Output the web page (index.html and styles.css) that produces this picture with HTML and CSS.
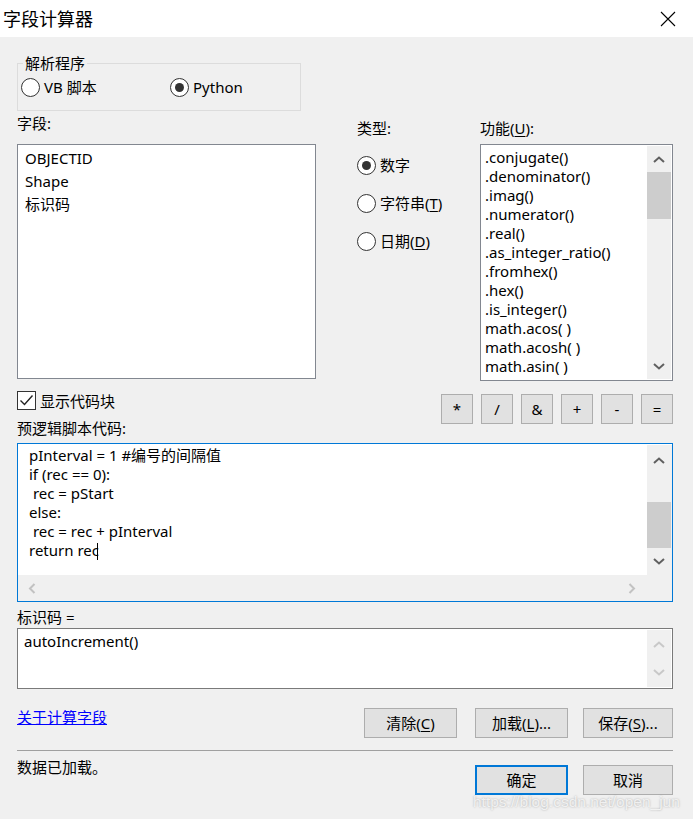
FILE: index.html
```html
<!DOCTYPE html>
<html lang="zh-CN">
<head>
    <meta charset="UTF-8">
    <title>字段计算器</title>
    <link rel="stylesheet" href="styles.css">
</head>
<body>
    <div class="titlebar">
        <span class="title">字段计算器</span>
        <svg class="close" width="16" height="16" viewBox="0 0 16 16"><path d="M1 1L15 15M15 1L1 15" stroke="#000" stroke-width="1.1" fill="none"/></svg>
    </div>

    <div class="dialog">
        <fieldset class="group">
            <legend>解析程序</legend>
            <div class="parser-row">
                <label class="radio parser-vb"><span class="circle"></span><span>VB 脚本</span></label>
                <label class="radio"><span class="circle checked"></span><span>Python</span></label>
            </div>
        </fieldset>

        <div class="main">
            <div class="col-fields">
                <div class="head">字段:</div>
                <div class="list fields-list">
                    <div class="field-item">OBJECTID</div>
                    <div class="field-item">Shape</div>
                    <div class="field-item">标识码</div>
                </div>
            </div>
            <div class="col-types">
                <div class="head">类型:</div>
                <div class="types">
                    <label class="radio"><span class="circle checked"></span><span>数字</span></label>
                    <label class="radio"><span class="circle"></span><span>字符串(<u>T</u>)</span></label>
                    <label class="radio"><span class="circle"></span><span>日期(<u>D</u>)</span></label>
                </div>
            </div>
            <div class="col-funcs">
                <div class="head">功能(<u>U</u>):</div>
                <div class="list funcs-list">
                    <div class="funcs">
                        <div>.conjugate()</div>
                        <div>.denominator()</div>
                        <div>.imag()</div>
                        <div>.numerator()</div>
                        <div>.real()</div>
                        <div>.as_integer_ratio()</div>
                        <div>.fromhex()</div>
                        <div>.hex()</div>
                        <div>.is_integer()</div>
                        <div>math.acos( )</div>
                        <div>math.acosh( )</div>
                        <div>math.asin( )</div>
                        <div>math.asinh( )</div>
                    </div>
                    <div class="vscroll">
                        <div class="sb-btn sb-up"><svg width="12" height="7" viewBox="0 0 12 7"><path d="M1 6L6 1.5L11 6" stroke="#606060" stroke-width="2" fill="none"/></svg></div>
                        <div class="thumb funcs-thumb"></div>
                        <div class="sb-fill"></div>
                        <div class="sb-btn sb-down"><svg width="12" height="7" viewBox="0 0 12 7"><path d="M1 1L6 5.5L11 1" stroke="#606060" stroke-width="2" fill="none"/></svg></div>
                    </div>
                </div>
            </div>
        </div>

        <div class="tools">
            <div class="tools-left">
                <label class="check-row"><span class="checkbox"><svg width="15" height="13" viewBox="0 0 15 13"><path d="M1.5 6.5L5.5 10.5L13.5 1.5" stroke="#222" stroke-width="1.4" fill="none"/></svg></span><span>显示代码块</span></label>
                <div class="code-label">预逻辑脚本代码:</div>
            </div>
            <div class="ops">
                <button class="btn op">*</button>
                <button class="btn op">/</button>
                <button class="btn op">&amp;</button>
                <button class="btn op">+</button>
                <button class="btn op">-</button>
                <button class="btn op">=</button>
            </div>
        </div>

        <div class="code-box">
            <div class="code-main">
                <pre class="code">pInterval = 1 #编号的间隔值
if (rec == 0):
 rec = pStart
else:
 rec = rec + pInterval
return rec<span class="caret"></span></pre>
                <div class="vscroll code-scroll">
                    <div class="sb-btn code-up"><svg width="12" height="7" viewBox="0 0 12 7"><path d="M1 6L6 1.5L11 6" stroke="#606060" stroke-width="2" fill="none"/></svg></div>
                    <div class="sb-gap"></div>
                    <div class="thumb code-thumb"></div>
                    <div class="sb-btn sb-fill"><svg width="12" height="7" viewBox="0 0 12 7"><path d="M1 1L6 5.5L11 1" stroke="#606060" stroke-width="2" fill="none"/></svg></div>
                </div>
            </div>
            <div class="hscroll">
                <svg width="8" height="11" viewBox="0 0 8 11"><path d="M6.5 1L2 5.5L6.5 10" stroke="#c2c2c2" stroke-width="2" fill="none"/></svg>
                <svg width="8" height="11" viewBox="0 0 8 11"><path d="M1.5 1L6 5.5L1.5 10" stroke="#c2c2c2" stroke-width="2" fill="none"/></svg>
            </div>
        </div>

        <div class="expr-label">标识码 =</div>
        <div class="expr-box">
            <div class="expr">autoIncrement()</div>
            <div class="vscroll expr-scroll">
                <div class="sb-btn"><svg width="12" height="7" viewBox="0 0 12 7"><path d="M1 6L6 1.5L11 6" stroke="#c8c8c8" stroke-width="2" fill="none"/></svg></div>
                <div class="sb-btn"><svg width="12" height="7" viewBox="0 0 12 7"><path d="M1 1L6 5.5L11 1" stroke="#c8c8c8" stroke-width="2" fill="none"/></svg></div>
            </div>
        </div>

        <div class="actions">
            <a class="help-link" href="#">关于计算字段</a>
            <button class="btn btn-clear">清除(<u>C</u>)</button>
            <button class="btn btn-load">加载(<u>L</u>)...</button>
            <button class="btn btn-save">保存(<u>S</u>)...</button>
        </div>

        <div class="separator"></div>

        <div class="status-row">
            <div class="status">数据已加载。</div>
            <button class="btn btn-ok">确定</button>
            <button class="btn btn-cancel">取消</button>
        </div>
    </div>

    <div class="watermark">https://blog.csdn.net/open_jun</div>
</body>
</html>
```

FILE: styles.css
```css
* {
    box-sizing: border-box;
}
body {
    margin: 0;
    width: 693px;
    height: 819px;
    overflow: hidden;
    position: relative;
    background-color: #f0f0f0;
    font-family: "Noto Sans", "Noto Sans CJK SC", sans-serif;
    font-size: 15px;
    color: #000;
}
.titlebar {
    height: 37px;
    background-color: #fff;
    display: flex;
    align-items: center;
    justify-content: space-between;
    padding: 0 17px 0 3px;
}
.title {
    font-size: 18px;
    line-height: 24px;
}
.close {
    display: block;
}
.dialog {
    padding: 0 20px 0 17px;
}
u {
    text-decoration-thickness: 1px;
    text-underline-offset: 2px;
}

/* radios and checkbox */
.radio {
    display: flex;
    align-items: center;
    gap: 4px;
    height: 20px;
    line-height: 18px;
}
.circle {
    width: 19px;
    height: 19px;
    border: 1px solid #333;
    border-radius: 50%;
    background-color: #fff;
    display: flex;
    align-items: center;
    justify-content: center;
}
.circle.checked::after {
    content: "";
    width: 9px;
    height: 9px;
    border-radius: 50%;
    background-color: #333;
}
.checkbox {
    width: 19px;
    height: 19px;
    border: 1px solid #333;
    background-color: #fff;
    display: flex;
    align-items: center;
    justify-content: center;
}

/* parser group */
.group {
    width: 284px;
    margin: 17px 0 0;
    padding: 5px 3px 13px;
    border: 1px solid #dcdcdc;
}
.group legend {
    margin-left: 2px;
    padding: 0 2px;
    line-height: 18px;
}
.parser-row {
    display: flex;
}
.parser-vb {
    width: 149px;
}

/* fields / types / functions */
.main {
    display: flex;
}
.head {
    line-height: 18px;
}
.col-fields {
    width: 299px;
}
.col-fields .head {
    margin-top: 3px;
}
.col-types {
    width: 123px;
    margin-left: 41px;
}
.col-types .head,
.col-funcs .head {
    margin-top: 8px;
}
.col-funcs {
    width: 193px;
}
.list {
    background-color: #fff;
    border: 1px solid #828790;
}
.fields-list {
    margin-top: 12px;
    height: 235px;
    padding: 2px 7px;
}
.field-item {
    line-height: 23px;
}
.types {
    margin-top: 18px;
    display: flex;
    flex-direction: column;
    gap: 18px;
}
.funcs-list {
    margin-top: 7px;
    height: 237px;
    display: flex;
    padding: 1px;
}
.funcs {
    flex: 1;
    overflow: hidden;
    padding: 2px 0 0 3px;
    line-height: 19px;
    white-space: nowrap;
}

/* scrollbars */
.vscroll {
    width: 24px;
    background-color: #f0f0f0;
    display: flex;
    flex-direction: column;
}
.sb-btn {
    height: 26px;
    display: flex;
    align-items: center;
    justify-content: center;
}
.sb-btn svg {
    display: block;
}
.thumb {
    background-color: #cdcdcd;
}
.funcs-thumb {
    height: 47px;
}
.sb-fill {
    flex: 1;
}
.code-up {
    height: 30px;
}
.sb-gap {
    height: 27px;
}
.code-thumb {
    height: 46px;
}

/* tools row */
.tools {
    display: flex;
    justify-content: space-between;
    align-items: flex-start;
}
.check-row {
    display: flex;
    align-items: center;
    gap: 4px;
    margin-top: 10px;
    height: 19px;
    line-height: 18px;
}
.code-label {
    margin-top: 9px;
    line-height: 18px;
}
.ops {
    display: flex;
    gap: 8px;
    margin-top: 13px;
}
.btn {
    font-family: "Noto Sans", "Noto Sans CJK SC", sans-serif;
    font-size: 15px;
    color: #000;
    height: 30px;
    background-color: #e1e1e1;
    border: 1px solid #adadad;
    padding: 0;
    line-height: 18px;
}
.op {
    width: 32px;
}

/* code block */
.code-box {
    margin-top: 6px;
    height: 159px;
    border: 1px solid #0078d7;
    background-color: #f0f0f0;
}
.code-main {
    display: flex;
    height: 131px;
    background-color: #fff;
}
.code {
    flex: 1;
    margin: 0;
    padding: 2px 11px;
    font-family: "Noto Sans", "Noto Sans CJK SC", sans-serif;
    font-size: 15px;
    line-height: 19px;
    white-space: pre;
    overflow: hidden;
}
.caret {
    display: inline-block;
    width: 1px;
    height: 17px;
    margin-left: -2px;
    background-color: #000;
    vertical-align: -4px;
}
.code-scroll {
    width: 25px;
    margin-top: 1px;
    padding-right: 1px;
}
.hscroll {
    height: 26px;
    display: flex;
    align-items: center;
    justify-content: space-between;
    padding: 0 36px 0 10px;
}
.hscroll svg {
    display: block;
}

/* expression */
.expr-label {
    margin-top: 6px;
    line-height: 18px;
}
.expr-box {
    margin-top: 2px;
    height: 61px;
    display: flex;
    background-color: #fff;
    border: 1px solid #7a7a7a;
    padding: 1px 1px 1px 0;
}
.expr {
    flex: 1;
    padding: 2px 6px;
    line-height: 19px;
}
.expr-scroll {
    justify-content: space-between;
}
.expr-scroll .sb-btn {
    height: 29px;
}

/* bottom */
.actions {
    display: flex;
    align-items: flex-start;
    margin-top: 19px;
}
.help-link {
    color: #0000ff;
    line-height: 18px;
    text-decoration-thickness: 1px;
}
.btn-clear {
    width: 93px;
    margin-left: auto;
}
.btn-load {
    width: 93px;
    margin-left: 18px;
}
.btn-save {
    width: 90px;
    margin-left: 15px;
}
.separator {
    margin-top: 12px;
    height: 1px;
    background-color: #a0a0a0;
}
.status-row {
    display: flex;
    align-items: flex-start;
    margin-top: 7px;
}
.status {
    line-height: 18px;
    margin-right: auto;
}
.btn-ok {
    width: 93px;
    margin-top: 7px;
    border: 2px solid #0078d7;
}
.btn-cancel {
    width: 90px;
    margin-top: 7px;
    margin-left: 15px;
}
.watermark {
    position: absolute;
    left: 473px;
    top: 793px;
    font-family: "Liberation Sans", sans-serif;
    font-size: 15.5px;
    color: rgba(255, 255, 255, 0.75);
    text-shadow: 0 0 2px rgba(120, 120, 120, 0.6);
    white-space: nowrap;
}
```
